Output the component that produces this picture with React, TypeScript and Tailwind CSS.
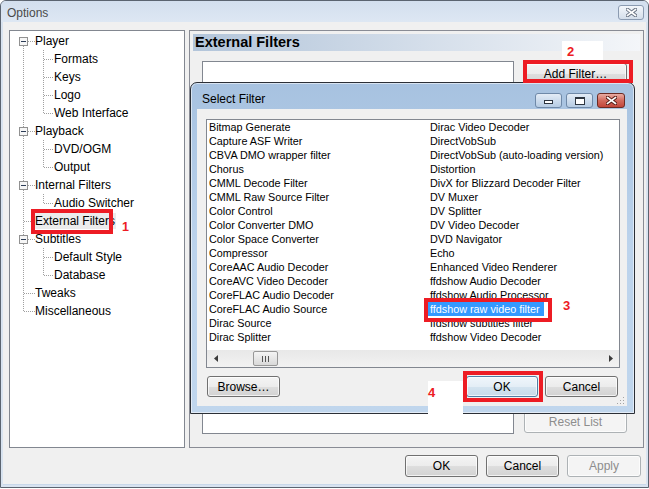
import React from 'react';

const leftCol = [
  'Bitmap Generate',
  'Capture ASF Writer',
  'CBVA DMO wrapper filter',
  'Chorus',
  'CMML Decode Filter',
  'CMML Raw Source Filter',
  'Color Control',
  'Color Converter DMO',
  'Color Space Converter',
  'Compressor',
  'CoreAAC Audio Decoder',
  'CoreAVC Video Decoder',
  'CoreFLAC Audio Decoder',
  'CoreFLAC Audio Source',
  'Dirac Source',
  'Dirac Splitter',
];

const rightCol = [
  'Dirac Video Decoder',
  'DirectVobSub',
  'DirectVobSub (auto-loading version)',
  'Distortion',
  'DivX for Blizzard Decoder Filter',
  'DV Muxer',
  'DV Splitter',
  'DV Video Decoder',
  'DVD Navigator',
  'Echo',
  'Enhanced Video Renderer',
  'ffdshow Audio Decoder',
  'ffdshow Audio Processor',
  'ffdshow raw video filter',
  'ffdshow subtitles filter',
  'ffdshow Video Decoder',
];

type Node = { label: string; level: 0 | 1; exp?: boolean; last?: boolean; sel?: boolean };

const tree: Node[] = [
  { label: 'Player', level: 0, exp: true },
  { label: 'Formats', level: 1 },
  { label: 'Keys', level: 1 },
  { label: 'Logo', level: 1 },
  { label: 'Web Interface', level: 1, last: true },
  { label: 'Playback', level: 0, exp: true },
  { label: 'DVD/OGM', level: 1 },
  { label: 'Output', level: 1, last: true },
  { label: 'Internal Filters', level: 0, exp: true },
  { label: 'Audio Switcher', level: 1, last: true },
  { label: 'External Filters', level: 0, sel: true },
  { label: 'Subtitles', level: 0, exp: true },
  { label: 'Default Style', level: 1 },
  { label: 'Database', level: 1, last: true },
  { label: 'Tweaks', level: 0 },
  { label: 'Miscellaneous', level: 0, last: true },
];

const Dots = ({ x1, y1, x2, y2 }: { x1: number; y1: number; x2: number; y2: number }) => (
  <line x1={x1} y1={y1} x2={x2} y2={y2} stroke="#a0a0a0" strokeDasharray="1 1" />
);

function TreeGlyph({ node, first }: { node: Node; first: boolean }) {
  if (node.level === 1) {
    return (
      <svg width="44" height="18" className="shrink-0">
        <Dots x1={13.5} y1={0} x2={13.5} y2={18} />
        <Dots x1={33.5} y1={0} x2={33.5} y2={node.last ? 10 : 18} />
        <Dots x1={34} y1={9.5} x2={43} y2={9.5} />
      </svg>
    );
  }
  return (
    <svg width="25" height="18" className="shrink-0">
      <Dots x1={13.5} y1={first ? 14 : 0} x2={13.5} y2={node.last ? 10 : 18} />
      <Dots x1={node.exp ? 18 : 14} y1={9.5} x2={25} y2={9.5} />
      {node.exp && (
        <>
          <rect x={9.5} y={5.5} width={8} height={8} fill="#f6f6f6" stroke="#919191" />
          <line x1={11} y1={9.5} x2={16} y2={9.5} stroke="#2c3d57" />
        </>
      )}
    </svg>
  );
}

function Button({
  label,
  className,
  disabled,
  isDefault,
}: {
  label: string;
  className: string;
  disabled?: boolean;
  isDefault?: boolean;
}) {
  const look = disabled
    ? 'border-[#adb2b5] bg-[#f4f4f4] text-[#8d8d8d]'
    : isDefault
      ? 'border-[#4f7ea6] bg-[linear-gradient(#f0f6fb_0%,#e4eef6_50%,#d4e4f0_50%,#c8dbea_100%)] text-black'
      : 'border-[#707070] bg-[linear-gradient(#f4f4f4_0%,#ececec_50%,#dedede_50%,#d2d2d2_100%)] text-black';
  return (
    <div
      className={`flex shrink-0 items-center justify-center rounded-[3px] border text-[12px] leading-none shadow-[inset_0_0_0_1px_rgba(255,255,255,0.7)] ${look} ${className}`}
    >
      {label}
    </div>
  );
}

function CloseX({ outline, w = 11, h = 9 }: { outline: string; w?: number; h?: number }) {
  return (
    <svg width={w} height={h}>
      <path d={`M1.5 1.5 L${w - 1.5} ${h - 1.5} M${w - 1.5} 1.5 L1.5 ${h - 1.5}`} stroke={outline} strokeWidth="3.6" strokeLinecap="square" />
      <path d={`M1.5 1.5 L${w - 1.5} ${h - 1.5} M${w - 1.5} 1.5 L1.5 ${h - 1.5}`} stroke="#ffffff" strokeWidth="1.6" strokeLinecap="square" />
    </svg>
  );
}

export default function App() {
  return (
    <div className="relative flex h-[488px] w-[649px] flex-col overflow-hidden rounded-t-[6px] border border-[#5b6470] bg-[#d8e3f0] font-['Liberation_Sans',Arial,sans-serif] text-black">
      {/* window title */}
      <div className="flex h-[21px] shrink-0 items-start bg-linear-to-b from-[#d3dfee] to-[#dde7f3] pl-[6px] pr-[4px]">
        <span className="mt-[5px] text-[12px] leading-[14px] text-[#4a4a4a]">Options</span>
        <div className="ml-auto mt-[4px] flex h-[15px] w-[26px] items-center justify-center rounded-[3px] border border-[#8b9bb1] bg-linear-to-b from-[#f4f7fb] to-[#d4deea]">
          <CloseX outline="#6d7786" />
        </div>
      </div>

      {/* client */}
      <div className="mx-[2px] mb-[2px] flex flex-1 flex-col border-b border-[#c9d8ea] bg-[#f0f0f0] pl-[6px] pt-[8px]">
        <div className="flex h-[418px] gap-[4px]">
          {/* tree */}
          <div className="w-[176px] border border-[#828790] bg-white pt-[1px]">
            {tree.map((n, i) => (
              <div key={n.label} className="flex h-[18px] items-center">
                <TreeGlyph node={n} first={i === 0} />
                <span
                  className={`whitespace-nowrap text-[12px] leading-[16px] ${n.sel ? '-ml-[1px] bg-[#ececec] px-[1px]' : ''}`}
                >
                  {n.label}
                </span>
              </div>
            ))}
          </div>

          {/* external filters page */}
          <div className="flex w-[455px] flex-col border border-[#898c95] p-[3px]">
            <div className="flex h-[17px] items-center bg-linear-to-r from-[#b3c5da] to-[#f4f6f9] pl-[2px] text-[14.5px] font-bold leading-none">
              External Filters
            </div>
            <div className="mt-[10px] flex pl-[9px]">
              <div className="h-[373px] w-[312px] border border-[#828790] bg-white" />
              <div className="ml-[10px] flex h-[373px] w-[103px] flex-col justify-between pb-[1px] pt-[2px]">
                <Button label="Add Filter…" className="h-[22px] w-[103px]" />
                <Button label="Reset List" className="h-[22px] w-[103px]" disabled />
              </div>
            </div>
          </div>
        </div>

        <div className="mt-[7px] flex h-[22px] justify-end gap-[8px] pr-[5px]">
          <Button label="OK" className="h-[22px] w-[73px]" />
          <Button label="Cancel" className="h-[22px] w-[73px]" />
          <Button label="Apply" className="h-[22px] w-[74px]" disabled />
        </div>
      </div>

      {/* Select Filter dialog */}
      <div className="absolute left-[189px] top-[81px] flex h-[332px] w-[445px] flex-col rounded-t-[7px] border border-[#2b2f36] bg-linear-to-b from-[#a7c2e0] via-[#bcd3ec] to-[#c0d6ed] shadow-[inset_0_0_0_1px_rgba(255,255,255,0.55)]">
        <div className="flex h-[26px] shrink-0 items-start pl-[11px] pr-[9px]">
          <span className="mt-[9px] text-[12px] leading-[14px]">Select Filter</span>
          <div className="ml-auto mt-[10px] flex gap-[4px]">
            <div className="flex h-[15px] w-[27px] items-end justify-center rounded-[3px] border border-[#6f89a8] bg-linear-to-b from-[#e3ecf6] to-[#b6cbe3] pb-[3px]">
              <div className="h-[4px] w-[9px] border border-[#2d3540] bg-white" />
            </div>
            <div className="flex h-[15px] w-[27px] items-center justify-center rounded-[3px] border border-[#6f89a8] bg-linear-to-b from-[#e3ecf6] to-[#b6cbe3]">
              <div className="h-[8px] w-[10px] border border-[#2d3540] border-t-2 bg-white" />
            </div>
            <div className="flex h-[15px] w-[28px] items-center justify-center rounded-[3px] border border-[#6b2b24] bg-linear-to-b from-[#e8aca3] via-[#d26a5e] to-[#c2453a]">
              <CloseX outline="#5a1f19" />
            </div>
          </div>
        </div>

        <div className="relative ml-[6px] h-[297px] w-[430px] bg-[#f0f0f0]">
          <div className="ml-[9px] mt-[10px] flex h-[249px] w-[414px] flex-col border border-[#828790] bg-white">
            <div className="grid grid-flow-col grid-cols-[221px_auto] grid-rows-[repeat(16,14px)] pl-[2px]">
              {leftCol.map((t) => (
                <div key={t} className="whitespace-nowrap text-[10.8px] leading-[14px]">
                  {t}
                </div>
              ))}
              {rightCol.map((t) => (
                <div key={t} className="whitespace-nowrap text-[10.8px] leading-[14px]">
                  {t === 'ffdshow raw video filter' ? (
                    <span className="-ml-[2px] inline-block bg-[#3399ff] pl-[2px] pr-[4px] text-white">{t}</span>
                  ) : (
                    t
                  )}
                </div>
              ))}
            </div>
            {/* horizontal scrollbar */}
            <div className="mt-auto flex h-[17px] bg-linear-to-b from-[#e8e8e8] to-[#f2f2f2]">
              <div className="flex w-[17px] items-center justify-center">
                <svg width="4" height="7">
                  <path d="M4 0 L0 3.5 L4 7 Z" fill="#3a3a3a" />
                </svg>
              </div>
              <div className="flex flex-1 items-center">
                <div className="ml-[29px] flex h-[15px] w-[25px] items-center justify-center gap-[2px] rounded-[2px] border border-[#979797] bg-linear-to-b from-[#f4f4f4] to-[#d9d9d9]">
                  <div className="h-[6px] w-px bg-[#555]" />
                  <div className="h-[6px] w-px bg-[#555]" />
                  <div className="h-[6px] w-px bg-[#555]" />
                </div>
              </div>
              <div className="flex w-[17px] items-center justify-center">
                <svg width="4" height="7">
                  <path d="M0 0 L4 3.5 L0 7 Z" fill="#3a3a3a" />
                </svg>
              </div>
            </div>
          </div>

          <div className="mt-[8px] flex h-[21px] gap-[7px] pl-[10px] pr-[9px]">
            <Button label="Browse…" className="h-[21px] w-[73px]" />
            <div className="flex-1" />
            <Button label="OK" className="h-[21px] w-[72px]" isDefault />
            <Button label="Cancel" className="h-[21px] w-[73px]" />
          </div>

          {/* size grip */}
          <svg width="8" height="8" className="absolute bottom-[1px] right-[2px]">
            <rect x="6" y="0" width="1" height="1" fill="#a3a3a3" />
            <rect x="3" y="3" width="1" height="1" fill="#a3a3a3" />
            <rect x="6" y="3" width="1" height="1" fill="#a3a3a3" />
            <rect x="0" y="6" width="1" height="1" fill="#a3a3a3" />
            <rect x="3" y="6" width="1" height="1" fill="#a3a3a3" />
            <rect x="6" y="6" width="1" height="1" fill="#a3a3a3" />
          </svg>
        </div>
      </div>

      {/* annotations */}
      <div className="absolute left-[30px] top-[208px] h-[25px] w-[82px] border-[4px] border-[#ed1c24]" />
      <span className="absolute left-[121px] top-[220px] text-[12.5px] font-bold leading-none text-[#ed1c24]">1</span>

      <div className="absolute left-[561px] top-[40px] h-[20px] w-[41px] bg-white pl-[5px] pt-[4px] text-[13px] font-bold leading-none text-[#ed1c24]">
        2
      </div>
      <div className="absolute left-[522px] top-[59px] h-[23px] w-[110px] border-[4px] border-[#ed1c24]" />

      <div className="absolute left-[423px] top-[297px] h-[24px] w-[128px] border-[4px] border-[#ed1c24]" />
      <span className="absolute left-[562px] top-[298px] text-[13px] font-bold leading-none text-[#ed1c24]">3</span>

      <div className="absolute left-[427px] top-[380px] h-[33px] w-[35px] bg-white pt-[5px] text-[13px] font-bold leading-none text-[#ed1c24]">
        4
      </div>
      <div className="absolute left-[462px] top-[370px] h-[31px] w-[80px] border-[4px] border-[#ed1c24]" />
    </div>
  );
}
